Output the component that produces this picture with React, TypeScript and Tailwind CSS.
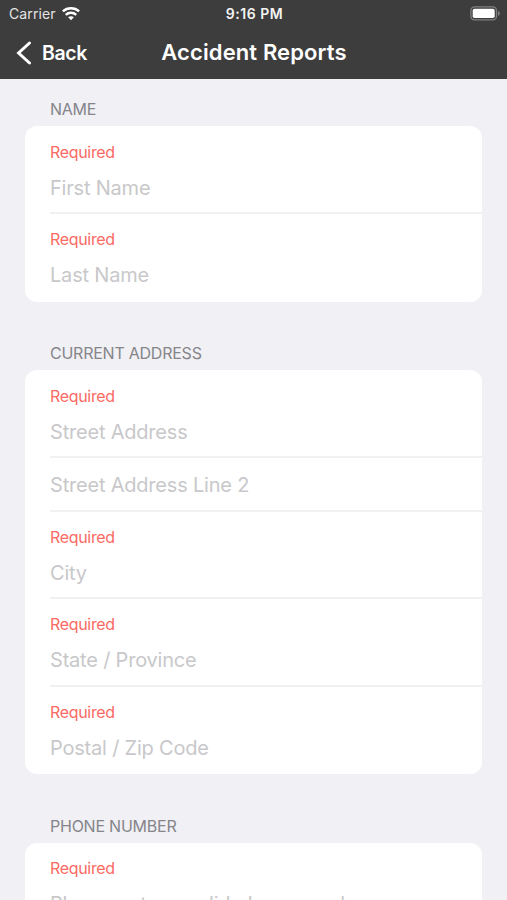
import React from 'react';

type Field = {
  label: string;
  required?: boolean;
};

type Section = {
  title: string;
  fields: Field[];
};

const sections: Section[] = [
  {
    title: 'NAME',
    fields: [
      { label: 'First Name', required: true },
      { label: 'Last Name', required: true },
    ],
  },
  {
    title: 'CURRENT ADDRESS',
    fields: [
      { label: 'Street Address', required: true },
      { label: 'Street Address Line 2' },
      { label: 'City', required: true },
      { label: 'State / Province', required: true },
      { label: 'Postal / Zip Code', required: true },
    ],
  },
  {
    title: 'PHONE NUMBER',
    fields: [{ label: 'Please enter a valid phone number.', required: true }],
  },
];

const WifiIcon = () => (
  <svg width="18" height="14" viewBox="0 0 18 14" fill="none" stroke="#fff" strokeWidth="2.5">
    <path d="M0.9 4.4C5.4 0.2 12.6 0.2 17.1 4.4" />
    <path d="M3.8 7.8C6.7 5.1 11.3 5.1 14.2 7.8" />
    <path d="M9 13.2L6.1 10.3C7.7 8.9 10.3 8.9 11.9 10.3Z" fill="#fff" stroke="none" />
  </svg>
);

const BatteryIcon = () => (
  <svg width="31" height="15" viewBox="0 0 31 15" fill="none">
    <rect x="0.9" y="0.9" width="25.6" height="13" rx="3.6" stroke="#808080" strokeWidth="1.3" />
    <rect x="2.7" y="2.7" width="22" height="9.4" rx="1.8" fill="#fff" />
    <path d="M28 5C30.4 5.8 30.4 9 28 9.8Z" fill="#808080" />
  </svg>
);

const StatusBar = () => (
  <div className="grid grid-cols-3 items-center h-[27px] pl-[9px] pr-[6px] text-white">
    <div className="flex items-center gap-[6px]">
      <span className="text-[14px] leading-[27px] tracking-[0.1px] text-[#e4e4e4]">Carrier</span>
      <WifiIcon />
    </div>
    <span className="pr-px text-center text-[14px] leading-[27px] tracking-[0.5px] font-semibold text-[#f4f4f4]">9:16 PM</span>
    <div className="flex justify-end">
      <BatteryIcon />
    </div>
  </div>
);

const NavBar = () => (
  <div className="grid grid-cols-[1fr_auto_1fr] items-center h-[52px] pl-4 pr-[15px] text-white">
    <button className="flex items-center gap-[10px]">
      <svg width="16" height="24" viewBox="0 0 16 24" fill="none" stroke="#fff" strokeWidth="3" strokeLinecap="round">
        <path d="M13.5 2L2.6 12L13.5 22" />
      </svg>
      <span className="text-[19.5px] leading-6 font-semibold tracking-[-0.4px]">Back</span>
    </button>
    <h1 className="text-[22px] leading-7 pb-[3px] font-semibold tracking-[0.12px]">Accident Reports</h1>
    <span />
  </div>
);

const FieldRow = ({ field, last }: { field: Field; last: boolean }) => (
  <div
    className={`ml-[25px] ${last ? '' : 'border-b-2 border-[#f1f1f2]'} ${
      field.required ? 'h-[87.5px] pt-[15px]' : 'h-[53.5px] pt-[15px]'
    }`}
  >
    {field.required && (
      <div className="text-[16px] leading-5 mb-[14px] tracking-[-0.32px] text-[#f96b64]">Required</div>
    )}
    <div className="text-[20px] leading-6 tracking-[-0.2px] whitespace-nowrap text-[#c8c8ca]">{field.label}</div>
  </div>
);

const FormSection = ({ section }: { section: Section }) => (
  <section>
    <h2 className="ml-[50px] text-[16px] leading-5 tracking-[-0.24px] text-[#85858a] pb-[7px]">{section.title}</h2>
    <div className="mx-[25px] pt-[0.5px] -mb-[0.5px] bg-white rounded-xl overflow-hidden">
      {section.fields.map((field, i) => (
        <FieldRow key={field.label} field={field} last={i === section.fields.length - 1} />
      ))}
    </div>
  </section>
);

const App = () => {
  return (
    <div className="w-full h-[900px] overflow-hidden bg-[#f1f0f5] font-['Inter',sans-serif]">
      <header className="h-[79px] bg-[#3d3d3d]">
        <StatusBar />
        <NavBar />
      </header>
      <main className="flex flex-col gap-[42px] pt-5">
        {sections.map((section) => (
          <FormSection key={section.title} section={section} />
        ))}
      </main>
    </div>
  );
};

export default App;
